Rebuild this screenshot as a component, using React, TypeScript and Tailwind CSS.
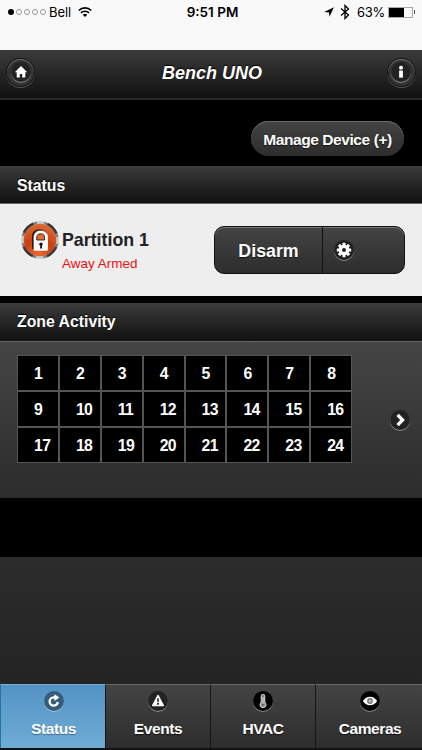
import React from 'react';

const ZONES = Array.from({ length: 24 }, (_, i) => i + 1);

const HomeIcon = () => (
  <svg viewBox="0 0 14 14" className="h-3.5 w-3.5 fill-white">
    <path d="M7 1 .8 7.2h1.9V12.6h3.1V9h2.4v3.6h3.1V7.2h1.9z" />
  </svg>
);

const InfoIcon = () => (
  <svg viewBox="0 0 14 14" className="h-3.5 w-3.5 fill-white">
    <circle cx="7" cy="2.8" r="2" />
    <path d="M5.1 5.6h3.8v7H5.1z" />
  </svg>
);

const GearIcon = () => (
  <svg viewBox="-8 -8 16 16" className="h-4 w-4 fill-white">
    {[0, 45, 90, 135].map((angle) => (
      <rect key={angle} x="-1.5" y="-7.2" width="3" height="14.4" rx="0.6" transform={`rotate(${angle})`} />
    ))}
    <circle r="5.2" />
    <circle r="2" fill="#222" />
  </svg>
);

const ChevronIcon = () => (
  <svg viewBox="0 0 14 14" className="h-3.5 w-3.5" fill="none" stroke="#fff" strokeWidth="3.3">
    <path d="M4.6 1.9 9.6 7l-5 5.1" />
  </svg>
);

const RefreshIcon = () => (
  <svg viewBox="0 0 16 16" className="h-4 w-4" fill="none">
    <path d="M11.8 9a4.1 4.1 0 1 1-4.1-4.6h1.6" stroke="#fff" strokeWidth="2.4" />
    <path d="M8.4 1.2 13.4 4.600 8.400 7.900z" fill="#fff" />
  </svg>
);

const AlertIcon = () => (
  <svg viewBox="0 0 16 16" className="h-4 w-4">
    <path d="M8 2.6 13.3 12.5H2.7z" fill="#fff" stroke="#fff" strokeWidth="1.5" strokeLinejoin="round" />
    <path d="M7 5.6h2l-.4 3.6H7.4zM7.1 10h1.8v1.7H7.1z" fill="#222" />
  </svg>
);

const ThermometerIcon = () => (
  <svg viewBox="0 0 16 18" className="h-[18px] w-4" fill="none" stroke="#c8c8c8">
    <path d="M6.3 10.4V4.2a1.7 1.7 0 0 1 3.4 0v6.2a2.9 2.9 0 1 1-3.4 0z" strokeWidth="1.2" fill="#777" />
    <path d="M8 5v7" stroke="#eee" />
    <circle cx="8" cy="12.8" r="1.2" fill="#333" strokeWidth=".6" />
  </svg>
);

const EyeIcon = () => (
  <svg viewBox="0 0 16 16" className="h-4 w-4">
    <path d="M.9 8C4.5 2.2 11.5 2.2 15.1 8 11.5 13.8 4.5 13.8.9 8z" fill="#fff" />
    <circle cx="8" cy="8" r="2.9" fill="#777" />
    <circle cx="8" cy="8" r="1.5" fill="#bbb" />
  </svg>
);

const LockBadge = () => (
  <svg viewBox="0 0 38 38" className="h-[38px] w-[38px] shrink-0">
    <defs>
      <radialGradient id="face" cx=".45" cy=".9" r=".95">
        <stop offset="0" stopColor="#ee6a32" />
        <stop offset=".45" stopColor="#c83f10" />
        <stop offset="1" stopColor="#e0703c" />
      </radialGradient>
    </defs>
    {/* chrome rim: dark on the diagonals, bright at the four sides */}
    <g fill="none">
      <circle cx="19" cy="19" r="17.5" stroke="#c8c8c8" strokeWidth="2.6" />
      <circle cx="19" cy="19" r="17.5" stroke="#808080" strokeWidth="2.6" strokeDasharray="20 7.49" strokeDashoffset="-3.75" />
      <circle cx="19" cy="19" r="17.5" stroke="#383838" strokeWidth="2.6" strokeDasharray="13 14.49" strokeDashoffset="-7.25" />
    </g>
    <circle cx="19" cy="19" r="16.3" fill="url(#face)" />
    <path d="M11 28V15.500c0-4.800 2.900-7 7.500-7S26 10.700 26 15v13z" fill="#2b160d" />
    <path
      d="M13 29.300V16.500c0-4.500 2.700-6.500 6.700-6.500s6.800 2 6.800 6.500v12.800z"
      fill="#fff"
      stroke="#fff"
      strokeWidth=".8"
      strokeLinejoin="round"
    />
    <path d="M15.700 19v-2.200c0-2.900 1.500-4 4-4s3.900 1.100 3.900 4V19z" fill="#df6a38" stroke="#351a0f" strokeWidth=".9" />
    <circle cx="20" cy="23.300" r="1.700" fill="#24120b" />
    <path d="M19.300 24h1.500l.4 3.500h-2.200z" fill="#24120b" />
  </svg>
);

interface IconDiscProps {
  className?: string;
  children: React.ReactNode;
}

const IconDisc: React.FC<IconDiscProps> = ({ className = 'bg-[#222]', children }) => (
  <span
    className={`flex h-5 w-5 shrink-0 items-center justify-center rounded-full shadow-[0_1px_0_rgba(255,255,255,0.4)] ${className}`}
  >
    {children}
  </span>
);

const RoundButton: React.FC<{ label: string; children: React.ReactNode }> = ({ label, children }) => (
  <button
    aria-label={label}
    className="flex h-[27px] w-[27px] items-center justify-center rounded-full bg-[#333] shadow-[0_0_0_1px_#111,0_1px_0_1px_#555,inset_0_1px_0_#707070]"
  >
    <IconDisc>{children}</IconDisc>
  </button>
);

const SectionHeading: React.FC<{ className: string; children: React.ReactNode }> = ({ className, children }) => (
  <h2
    className={`flex items-center bg-linear-to-b from-[#3c3c3c] to-[#111] pl-[17px] text-[15.8px] font-bold text-white [text-shadow:0_-1px_1px_#000] ${className}`}
  >
    {children}
  </h2>
);

const PhoneStatusBar = () => (
  <div className="relative flex h-[50px] items-start justify-between bg-[#f9f9f9] pt-1 pr-[7px] pl-2 font-['Inter',sans-serif] text-black">
    <div className="flex h-4 items-center">
      <div className="flex gap-[2px]">
        <span className="h-1.5 w-1.5 rounded-full bg-black" />
        {[1, 2, 3, 4].map((dot) => (
          <span key={dot} className="h-1.5 w-1.5 rounded-full border border-[#999]" />
        ))}
      </div>
      <span className="ml-[3px] w-[23px] text-[13px] leading-4 tracking-[-0.1px]">Bell</span>
      <svg viewBox="0 0 14 10" className="ml-[6px] h-2.5 w-3.5" fill="none" stroke="#000" strokeWidth="1.7">
        <path d="M.8 3.500a8.800 8.800 0 0 1 12.400 0M3 5.900a5.700 5.700 0 0 1 8 0" />
        <path d="M4.800 7.700a3.200 3.200 0 0 1 4.400 0L7 9.900z" fill="#000" stroke="none" />
      </svg>
    </div>
    <span className="absolute inset-x-0 top-1 pl-[3px] text-center text-[13.5px] leading-4 font-semibold">9:51 PM</span>
    <div className="flex h-4 items-center">
      <svg viewBox="0 0 10 10" className="h-2.5 w-2.5 fill-black">
        <path d="M9.900.2 5.500 9.800 5 5.400.2 4.900z" />
      </svg>
      <svg viewBox="0 0 10 16" className="ml-1.5 h-4 w-2.5" fill="none" stroke="#000" strokeWidth="1.300">
        <path d="M1 4.500 8.500 11 5 14.500v-13L8.500 5 1 11.500" />
      </svg>
      <span className="ml-[7px] w-[27px] text-[13px] leading-4 tracking-[-0.3px]">63%</span>
      <span className="ml-1 flex h-[11px] w-[25px] border border-[#aaa]">
        <span className="w-[15px] bg-black" />
      </span>
      <span className="ml-px h-1 w-px bg-[#555]" />
    </div>
  </div>
);

const TABS = [
  { label: 'Status', icon: <RefreshIcon />, disc: 'bg-[#365c7c]' },
  { label: 'Events', icon: <AlertIcon />, disc: 'bg-[#222]' },
  { label: 'HVAC', icon: <ThermometerIcon />, disc: 'bg-black' },
  { label: 'Cameras', icon: <EyeIcon />, disc: 'bg-black' },
];

const TabBar = () => (
  <nav className="grid h-[66px] grid-cols-[106px_105px_105px_106px] border-b-2 border-[#111] bg-[#111]">
    {TABS.map((tab, i) => (
      <button
        key={tab.label}
        className={`flex flex-col items-center border-t pt-[6px] text-[15.5px] font-bold tracking-[-0.4px] text-white ${
          i === 0
            ? 'border-t-[#78aed5] border-l border-l-[#2373a5] bg-linear-to-b from-[#5393c5] to-[#6facd5] pl-px [text-shadow:0_1px_1px_#3e6790]'
            : 'border-t-[#666] bg-linear-to-b from-[#444] to-[#2d2d2d] [text-shadow:0_1px_1px_#111]'
        } ${i < 3 ? 'border-r border-r-[#151515]' : 'pl-0.5'}`}
      >
        <IconDisc className={tab.disc}>{tab.icon}</IconDisc>
        <span className="mt-[6px] leading-6">{tab.label}</span>
      </button>
    ))}
  </nav>
);

export default function App() {
  return (
    <div className="flex h-[750px] w-[422px] flex-col overflow-hidden bg-black font-['Liberation_Sans',Arial,sans-serif]">
      <PhoneStatusBar />

      <header className="flex h-[50px] items-center justify-between border-b-2 border-[#292929] bg-linear-to-b from-[#3c3c3c] to-[#111] pr-[7px] pb-1 pl-[7px]">
        <RoundButton label="Home">
          <HomeIcon />
        </RoundButton>
        <h1 className="pt-0.5 pl-0.5 text-lg font-bold text-white italic [text-shadow:0_-1px_1px_#000]">Bench UNO</h1>
        <RoundButton label="Info">
          <InfoIcon />
        </RoundButton>
      </header>

      <div className="flex h-[66px] justify-end pt-[21px] pr-[18px]">
        <button className="h-[35px] w-[153px] rounded-full bg-linear-to-b from-[#444] to-[#2d2d2d] pt-[3px] text-[15.5px] font-bold tracking-[-0.42px] whitespace-nowrap text-white shadow-[inset_0_1px_0_#6a6a6a] [text-shadow:0_1px_1px_#111]">
          Manage Device (+)
        </button>
      </div>

      <SectionHeading className="h-[38px] border-b border-[#666] pt-0.5">Status</SectionHeading>
      <section className="flex h-[92px] items-start bg-[#eee] pr-[17px] pl-[21px]">
        <div className="flex flex-1 pt-[17px]">
          <LockBadge />
          <div className="pt-[7px] pl-[3px]">
            <h3 className="text-[17.8px] leading-6 font-bold text-[#222]">Partition 1</h3>
            <p className="text-[13.5px] leading-6 text-[#f01010]">Away Armed</p>
          </div>
        </div>
        <div className="mt-[22px] flex h-[48px] w-[191px] overflow-hidden rounded-[10px] border border-[#111] bg-linear-to-b from-[#444] to-[#2d2d2d] shadow-[inset_0_1px_0_#777]">
          <button className="w-[108px] border-r border-[#111] pt-0.5 text-[17.8px] font-bold text-white [text-shadow:0_1px_1px_#111]">
            Disarm
          </button>
          <button aria-label="Settings" className="flex flex-1 items-center pl-[11px]">
            <IconDisc>
              <GearIcon />
            </IconDisc>
          </button>
        </div>
      </section>

      <SectionHeading className="mt-[7px] h-[39px] border-b border-[#666]">Zone Activity</SectionHeading>
      <section className="flex h-[156px] items-start justify-between bg-linear-to-b from-[#454545] to-[#2c2c2c] pt-[13px] pr-3 pl-[17px]">
        <div className="grid w-[335px] grid-cols-8">
          {ZONES.map((zone) => (
            <div
              key={zone}
              className="flex h-9 items-center border border-[#555] bg-black pt-px pl-4 text-[15.8px] font-bold tracking-[-0.6px] text-white"
            >
              {zone}
            </div>
          ))}
        </div>
        <button aria-label="Next" className="mt-[55px]">
          <IconDisc>
            <ChevronIcon />
          </IconDisc>
        </button>
      </section>

      <div className="mt-[59px] flex-1 bg-linear-to-b from-[#2c2c2c] to-[#242424]" />
      <TabBar />
    </div>
  );
}
